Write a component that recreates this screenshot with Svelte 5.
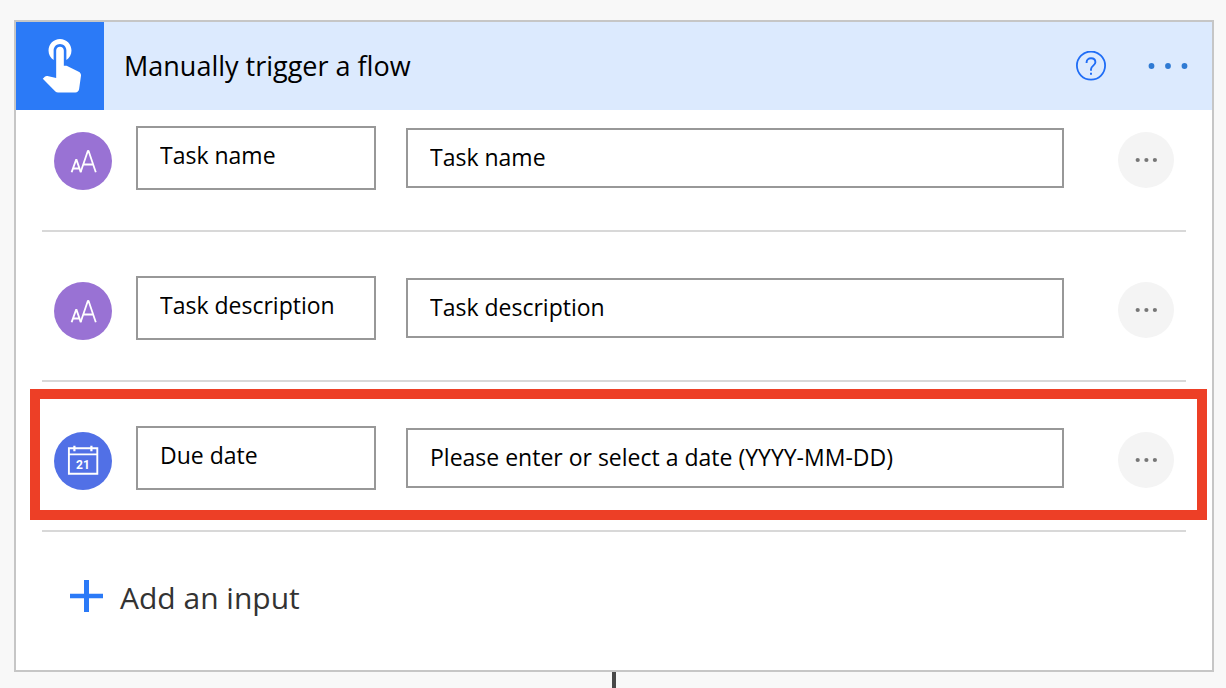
<script>
  let rows = $state([
    { id: 'name', kind: 'text', title: 'Task name', prompt: 'Task name', highlighted: false },
    { id: 'description', kind: 'text', title: 'Task description', prompt: 'Task description', highlighted: false },
    { id: 'due', kind: 'date', title: 'Due date', prompt: 'Please enter or select a date (YYYY-MM-DD)', highlighted: true },
  ]);
</script>

<main class="canvas">
  <section class="card">
    <header class="head">
      <div class="tile">
        <svg viewBox="-5.75 -3.67 34.5 34.5" aria-hidden="true">
          <path fill="#fff" d="M9 11.24V7.5C9 6.12 10.12 5 11.5 5S14 6.12 14 7.5v3.74c1.21-.81 2-2.18 2-3.74C16 5.01 13.99 3 11.5 3S7 5.01 7 7.5c0 1.56.79 2.93 2 3.74zm9.84 4.63l-4.54-2.26c-.17-.07-.35-.11-.54-.11H13v-6c0-.83-.67-1.5-1.5-1.5S10 6.67 10 7.5v10.74l-3.43-.72c-.08-.01-.15-.03-.24-.03-.31 0-.59.13-.79.33l-.79.8 4.94 4.94c.27.27.65.44 1.06.44h6.79c.75 0 1.33-.55 1.44-1.28l.75-5.27c.01-.07.02-.14.02-.2 0-.62-.38-1.16-.91-1.38z" />
        </svg>
      </div>
      <h1>Manually trigger a flow</h1>
      <button class="help" aria-label="Help">
        <svg width="30" height="30" viewBox="0 0 30 30" fill="none" stroke="#1f6df6" aria-hidden="true">
          <circle cx="15" cy="14.6" r="14.1" stroke-width="1.8" />
          <path stroke-width="1.9" d="M10.6 12V11.3C10.6 9 12.5 7.3 15 7.3S19.4 8.8 19.4 11.3C19.4 14.5 15 14.8 15 18.2V19.8" />
          <path stroke-width="2" d="M15 21.8V23.8" />
        </svg>
      </button>
      <button class="menu" aria-label="Step menu">
        <svg width="40" height="8" viewBox="0 0 40 8" fill="#2f7ad3" aria-hidden="true">
          <circle cx="3.5" cy="4" r="2.9" /><circle cx="20" cy="4" r="2.9" /><circle cx="36.5" cy="4" r="2.9" />
        </svg>
      </button>
    </header>

    <div class="rows">
      {#each rows as row (row.id)}
        <div class="row" class:highlighted={row.highlighted}>
          <span class="badge {row.kind}">
            {#if row.kind === 'text'}
              <svg viewBox="0 0 58 58" fill="none" stroke="#fff" stroke-linejoin="bevel" aria-hidden="true">
                <path stroke-width="1.9" d="M17.6 40.3L22.3 27.2L26.8 40.3M19 36.5H25.6" />
                <path stroke-width="1.8" d="M26.6 40.3L33.9 18.8H34.5L41.8 40.3M29.5 32.5H38.9" />
              </svg>
            {:else}
              <svg viewBox="0 0 58 58" fill="none" stroke="#fff" aria-hidden="true">
                <path stroke-width="1.9" d="M14.9 16.3H43.3V41.8H14.9ZM14.9 22.4H43.3" />
                <path stroke-width="2.2" d="M20.4 13.7V19.3M37.4 13.7V19.3" />
                <text x="29" y="37" text-anchor="middle" fill="#fff" stroke="none">21</text>
              </svg>
            {/if}
          </span>
          <input class="title" aria-label="Input title" bind:value={row.title} />
          <input class="prompt" aria-label="Input prompt" bind:value={row.prompt} />
          <button class="more" aria-label="More options">
            <svg width="22" height="6" viewBox="0 0 22 6" fill="#767676" aria-hidden="true">
              <circle cx="2.7" cy="3" r="2.1" /><circle cx="11.4" cy="3" r="2.1" /><circle cx="19.9" cy="3" r="2.1" />
            </svg>
          </button>
        </div>
      {/each}
    </div>

    <button class="add">
      <svg width="33" height="32" viewBox="0 0 33 32" aria-hidden="true">
        <path fill="#2b7af7" d="M14 0H19V13.7H33V18.3H19V32H14V18.3H0V13.7H14Z" />
      </svg>
      <span>Add an input</span>
    </button>
  </section>
  <div class="connector"></div>
</main>

<style>
  :global(body) {
    margin: 0;
    background: #f8f8f8;
  }
  .canvas,
  .canvas * {
    box-sizing: border-box;
  }
  .canvas {
    display: flex;
    flex-direction: column;
    min-height: 100vh;
    padding: 20px 12px 0 14px;
    font-family: 'Open Sans', 'Noto Sans', sans-serif;
    color: #000;
  }
  button {
    padding: 0;
    border: 0;
    background: none;
    font: inherit;
    color: inherit;
    cursor: pointer;
  }
  svg {
    display: block;
  }
  .card {
    border: 2px solid #c6c6c6;
    background: #fff;
  }
  .head {
    display: flex;
    align-items: center;
    height: 88px;
    padding-right: 24px;
    background: #dceafe;
  }
  .tile {
    width: 88px;
    height: 88px;
    background: #2b7af7;
  }
  h1 {
    flex: 1;
    margin: 0 0 0 20px;
    font-size: 27px;
    line-height: 36px;
    font-weight: 400;
  }
  .help {
    margin-right: 42px;
  }
  .rows {
    padding: 0 26px;
  }
  .row {
    position: relative;
    display: flex;
    align-items: center;
    padding: 44px 12px 40px;
    border-bottom: 2px solid #d8d8d8;
  }
  .row:first-child {
    padding-top: 16px;
  }
  .highlighted::after {
    content: '';
    position: absolute;
    inset: 7px -21px 10px -12px;
    border: 10px solid #ed3f26;
    pointer-events: none;
  }
  .badge {
    align-self: flex-end;
    width: 58px;
    height: 58px;
    border-radius: 50%;
    background: #9972d4;
  }
  .badge.date {
    background: #5170e6;
  }
  .badge text {
    font-family: Roboto, sans-serif;
    font-size: 12px;
    font-weight: 700;
  }
  input {
    min-width: 0;
    border: 2px solid #989898;
    border-radius: 0;
    background: #fff;
    font: inherit;
    font-size: 23px;
    line-height: 32px;
    color: inherit;
  }
  .title {
    width: 240px;
    height: 64px;
    margin: 0 30px 0 24px;
    padding: 0 22px 6px;
  }
  .prompt {
    flex: 1;
    height: 60px;
    padding: 0 22px 2px;
  }
  .more {
    display: grid;
    place-items: center;
    width: 56px;
    height: 56px;
    margin: 4px 0 0 54px;
    border-radius: 50%;
    background: #f4f4f4;
  }
  .add {
    display: flex;
    align-items: center;
    gap: 17px;
    margin: 42px 0 52px 54px;
    font-size: 30px;
    line-height: 44px;
    color: #333;
  }
  .add span {
    padding-top: 4px;
    line-height: 40px;
  }
  .connector {
    flex: 1;
    align-self: center;
    width: 4px;
    min-height: 16px;
    background: #484848;
  }
</style>
